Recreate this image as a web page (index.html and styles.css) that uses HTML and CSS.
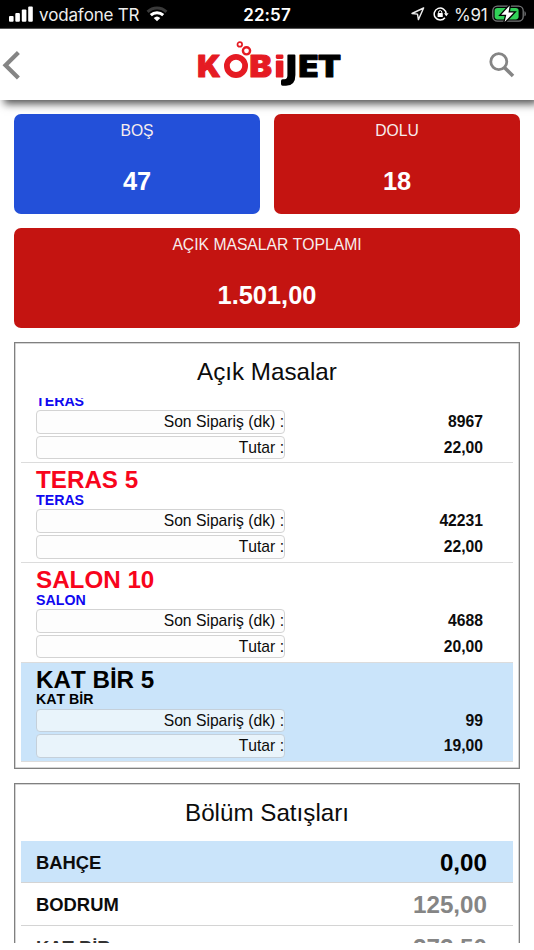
FILE: index.html
```html
<!DOCTYPE html>
<html lang="tr">
<head>
<meta charset="utf-8">
<meta name="viewport" content="width=device-width, initial-scale=1">
<title>KobiJet</title>
<link rel="stylesheet" href="styles.css">
</head>
<body>
<div class="statusbar">
  <div class="carrier">
    <svg class="signal" width="24" height="16" viewBox="0 0 24 16" fill="#fff"><rect x="0" y="10" width="4.6" height="5.8" rx="1"/><rect x="6.3" y="7" width="4.6" height="8.8" rx="1"/><rect x="12.8" y="3.6" width="4.6" height="12.2" rx="1"/><rect x="19.2" y="0.4" width="4.6" height="15.4" rx="1"/></svg>
    <span class="carrier-name">vodafone TR</span>
    <svg class="wifi" width="22" height="16" viewBox="0 0 22 16" fill="none" stroke-width="3"><path d="M1.6 5.9A13.5 13.5 0 0 1 20.4 5.9" stroke="#3a3a3a"/><path d="M4.8 9.2A9 9 0 0 1 17.2 9.2" stroke="#fff"/><path d="M11 15.2L7.7 12A4.8 4.8 0 0 1 14.3 12Z" fill="#fff"/></svg>
  </div>
  <div class="clock">22:57</div>
  <div class="indicators">
    <svg class="location" width="14" height="14" viewBox="0 0 14 14" fill="none" stroke="#eee" stroke-width="1.4" stroke-linejoin="round"><path d="M12.6 1L1 6.5L6.5 7.1L7.4 12.6Z"/></svg>
    <svg class="lock" width="16" height="14" viewBox="0 0 16 14"><path d="M11.9 10.8A6 6 0 1 1 13.2 6.6" fill="none" stroke="#fff" stroke-width="1.5"/><path d="M11 6.3h4.6L13.3 9.2Z" fill="#fff"/><rect x="4.6" y="6.1" width="5.2" height="4" rx=".6" fill="#fff"/><path d="M5.6 6.4V5.2a1.6 1.6 0 0 1 3.2 0V6.4" fill="none" stroke="#fff" stroke-width="1"/></svg>
    <span class="percent">%91</span>
    <svg class="battery" width="35" height="18" viewBox="0 0 35 18"><rect x=".8" y="1.2" width="30.4" height="15" rx="4.6" fill="none" stroke="#77797a" stroke-width="1.3"/><rect x="2.6" y="3" width="24" height="11.4" rx="2.8" fill="#31d158"/><path d="M32.5 6.2c1.8.5 1.8 4.6 0 5.1Z" fill="#77797a"/><path d="M17.7.6L9.2 9.8h5.1L12.6 17.1l9.2-9.6h-5.3Z" fill="#fff" stroke="#000" stroke-width="2.6" paint-order="stroke"/></svg>
  </div>
</div>
<header class="header">
  <svg class="back" width="22" height="32" viewBox="0 0 22 32" fill="none" stroke="#858585" stroke-width="4.2"><path d="M19.4 3.5L6.5 16.3L19.4 29.1"/></svg>
  <svg class="logo" width="148" height="48" viewBox="0 0 148 48">
    <g class="logo-type" fill="#e51b23" stroke="#e51b23">
      <text x="2.2" y="37" textLength="23.4" lengthAdjust="spacingAndGlyphs">K</text>
      <text x="54.6" y="37" textLength="22.4" lengthAdjust="spacingAndGlyphs">B</text>
    </g>
    <circle cx="41" cy="25.9" r="9.1" fill="none" stroke="#e51b23" stroke-width="5.8"/>
    <circle cx="51.5" cy="10.8" r="3.6" fill="#fff" stroke="#e51b23" stroke-width="2.4"/>
    <circle cx="44.8" cy="4.4" r="2.3" fill="#fff" stroke="#e51b23" stroke-width="1.7"/>
    <rect x="80.8" y="14.4" width="7.6" height="4.6" rx="1.4" fill="#e51b23"/>
    <rect x="80.8" y="20.4" width="7.6" height="17.2" rx="1.2" fill="#e51b23"/>
    <g class="logo-type" fill="#000" stroke="#000">
      <text x="103.4" y="37" textLength="20" lengthAdjust="spacingAndGlyphs">E</text>
      <text x="123" y="37" textLength="23" lengthAdjust="spacingAndGlyphs">T</text>
    </g>
    <path d="M92.4 15.6q0-1 1-1h6q1 0 1 1V35Q100.4 45.8 91 45.8H87.6Q86 45.8 86 44V41Q86 39.2 87.6 39.2H89.4Q92.4 39.2 92.4 35.6Z" fill="#000"/>
  </svg>
  <svg class="search" width="26" height="26" viewBox="0 0 26 26" fill="none" stroke="#858585"><circle cx="9.8" cy="9.7" r="8" stroke-width="2.8"/><path d="M15.4 15.4L24 24" stroke-width="3.6"/></svg>
</header>
<main class="content">
  <section class="stats">
    <div class="stat stat-blue"><div class="stat-label">BOŞ</div><div class="stat-value">47</div></div>
    <div class="stat"><div class="stat-label">DOLU</div><div class="stat-value">18</div></div>
    <div class="stat stat-wide"><div class="stat-label">AÇIK MASALAR TOPLAMI</div><div class="stat-value">1.501,00</div></div>
  </section>
  <section class="panel tables">
    <h2>Açık Masalar</h2>
    <div class="table-list">
      <article class="table-row partial">
        <h4>TERAS</h4>
        <div class="field"><span class="label">Son Sipariş (dk) :</span><b>8967</b></div>
        <div class="field"><span class="label">Tutar :</span><b>22,00</b></div>
      </article>
      <article class="table-row">
        <h3>TERAS 5</h3><h4>TERAS</h4>
        <div class="field"><span class="label">Son Sipariş (dk) :</span><b>42231</b></div>
        <div class="field"><span class="label">Tutar :</span><b>22,00</b></div>
      </article>
      <article class="table-row">
        <h3>SALON 10</h3><h4>SALON</h4>
        <div class="field"><span class="label">Son Sipariş (dk) :</span><b>4688</b></div>
        <div class="field"><span class="label">Tutar :</span><b>20,00</b></div>
      </article>
      <article class="table-row selected">
        <h3>KAT BİR 5</h3><h4>KAT BİR</h4>
        <div class="field"><span class="label">Son Sipariş (dk) :</span><b>99</b></div>
        <div class="field"><span class="label">Tutar :</span><b>19,00</b></div>
      </article>
    </div>
  </section>
  <section class="panel sales">
    <h2>Bölüm Satışları</h2>
    <div class="sale selected"><span>BAHÇE</span><b>0,00</b></div>
    <div class="sale"><span>BODRUM</span><b>125,00</b></div>
    <div class="sale faded"><span>KAT BİR</span><b>272,50</b></div>
  </section>
</main>
</body>
</html>
```
FILE: styles.css
```css
* { box-sizing: border-box; }
body {
  margin: 0;
  height: 950px;
  overflow: hidden;
  display: flex;
  flex-direction: column;
  background: #fff;
  color: #0c0c0c;
  font-family: "Liberation Sans", Arial, sans-serif;
  font-kerning: none;
}
svg { display: block; flex: none; }
h2, h3, h4 { margin: 0; }

.statusbar {
  flex: none;
  height: 29px;
  display: grid;
  grid-template-columns: 1fr auto 1fr;
  align-items: center;
  background: #000;
  border-bottom: 1px solid #555;
  color: #fff;
  font-family: Inter, sans-serif;
  font-size: 17px;
}
.carrier { display: flex; align-items: center; padding-left: 9px; }
.carrier-name { margin-left: 6px; width: 101px; color: #eee; white-space: nowrap; letter-spacing: -.25px; padding-top: 1px; }
.wifi { margin-left: 6px; }
.clock { font-weight: 600; font-size: 17px; letter-spacing: .1px; padding-top: 1px; }
.indicators { display: flex; align-items: center; justify-content: flex-end; padding-right: 7px; }
.lock { margin-left: 8px; }
.percent { margin-left: 5px; width: 35px; color: #eee; letter-spacing: -.2px; white-space: nowrap; padding-top: 1px; }
.battery { margin-left: 3px; }

.header {
  flex: none;
  height: 71px;
  display: grid;
  grid-template-columns: 195px 148px 1fr;
  align-items: center;
  padding-right: 19px;
  background: #fff;
  box-shadow: 4px 4px 8px #555;
  position: relative;
  z-index: 1;
}
.back { margin-left: -1px; }
.logo { margin-top: -1px; }
.search { justify-self: end; }
.logo-type { font: 900 29.5px Inter, sans-serif; stroke-width: 1px; stroke-linejoin: round; }

.content { flex: none; height: 843px; overflow: hidden; padding: 14px 14px 0; }
.stats { display: grid; grid-template-columns: 1fr 1fr; gap: 14.5px 14px; }
.stat {
  height: 99.5px;
  border-radius: 7px;
  background: #c41411;
  color: #fff;
  text-align: center;
}
.stat-blue { background: #2350d9; }
.stat-wide { grid-column: 1 / -1; }
.stat-label { padding-top: 7px; font-size: 15.7px; line-height: 20px; color: #f7eded; }
.stat-value { margin-top: 25px; font-size: 25.4px; line-height: 30px; font-weight: bold; }

.panel { border: 1px solid #808080; box-shadow: inset 0 0 0 .5px #aaa; padding: 0 6px; }
.panel h2 { font-size: 24.2px; font-weight: normal; line-height: 28px; padding-top: 15px; text-align: center; }
.tables { margin-top: 14.5px; height: 427px; }
.table-list {
  margin-top: 12.4px;
  height: 364px;
  overflow: hidden;
  display: flex;
  flex-direction: column;
  justify-content: flex-end;
}
.table-row {
  flex: none;
  height: 99.7px;
  padding: 4px 30px 0 15px;
  border-bottom: 1px solid #dcdcdc;
}
.partial { height: 70.7px; padding-top: 0; }
.table-row h3 { color: #f8041c; font-size: 24.2px; line-height: 26px; height: 24.5px; }
.table-row h4 { color: #1008f0; font-size: 14.2px; line-height: 16px; height: 17.5px; }
.field { display: flex; margin-bottom: 2px; font-size: 15.7px; line-height: 23.6px; }
.field b { flex: 1; text-align: right; }
.label {
  width: 249px;
  height: 23.6px;
  border: 1px solid #d3d3d3;
  border-radius: 4px;
  background: #fdfdfd;
  text-align: right;
  line-height: 22px;
}
.selected { background: #cae4fa; }
.selected h3, .selected h4 { color: #000; }
.selected .label { background: #e9f4fb; border-color: #c5d0da; }

.sales { margin-top: 14px; height: 300px; }
.sales h2 { margin-bottom: 14px; }
.sale {
  height: 42.4px;
  display: flex;
  align-items: center;
  justify-content: space-between;
  padding: 2px 26px 0 15px;
  border-bottom: 1px solid #d4d4d4;
  font-size: 18.4px;
  font-weight: bold;
}
.sale b { font-size: 24.2px; color: #858585; }
.sale.selected b { color: #000; }
.sale.faded { padding-top: 4px; color: #333; }
```
